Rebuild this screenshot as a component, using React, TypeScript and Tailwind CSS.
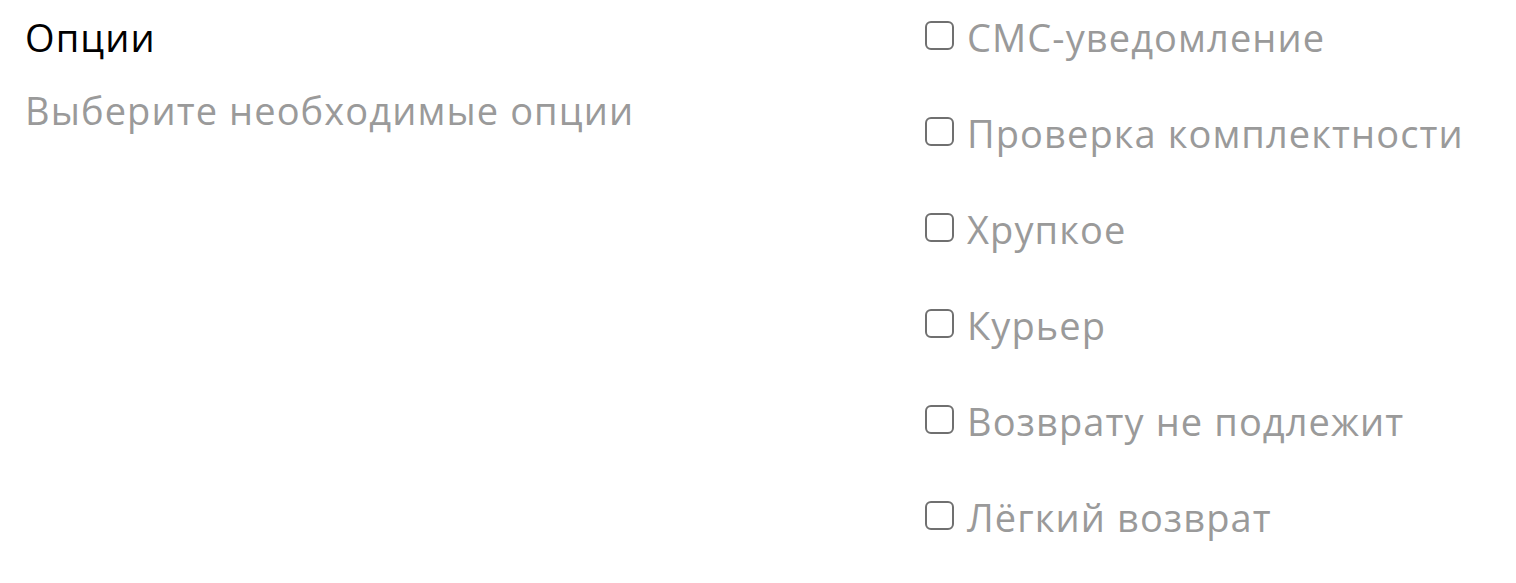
import React from "react";

const options = [
  "СМС-уведомление",
  "Проверка комплектности",
  "Хрупкое",
  "Курьер",
  "Возврату не подлежит",
  "Лёгкий возврат",
];

export default function App() {
  return (
    <div className="flex w-[1516px] h-[583px] bg-white" style={{ fontFamily: '"Open Sans", sans-serif' }}>
      <div className="w-[925px] pl-[25px] pt-[10px] flex flex-col">
        <div className="text-[38px] tracking-[1.1px] leading-[54px] text-black">Опции</div>
        <div className="text-[38px] tracking-[1.1px] leading-[54px] text-[#9a9a9a] mt-[19px]">Выберите необходимые опции</div>
      </div>
      <div className="flex flex-col pt-[10px] gap-[42px]">
        {options.map((o) => (
          <label key={o} className="flex items-center h-[54px] gap-[13px]">
            <span className="w-[29px] h-[29px] border-2 border-[#707070] rounded-[6px] -mt-[4px]"></span>
            <span className="text-[38px] tracking-[1.1px] leading-[54px] text-[#9a9a9a]">{o}</span>
          </label>
        ))}
      </div>
    </div>
  );
}
